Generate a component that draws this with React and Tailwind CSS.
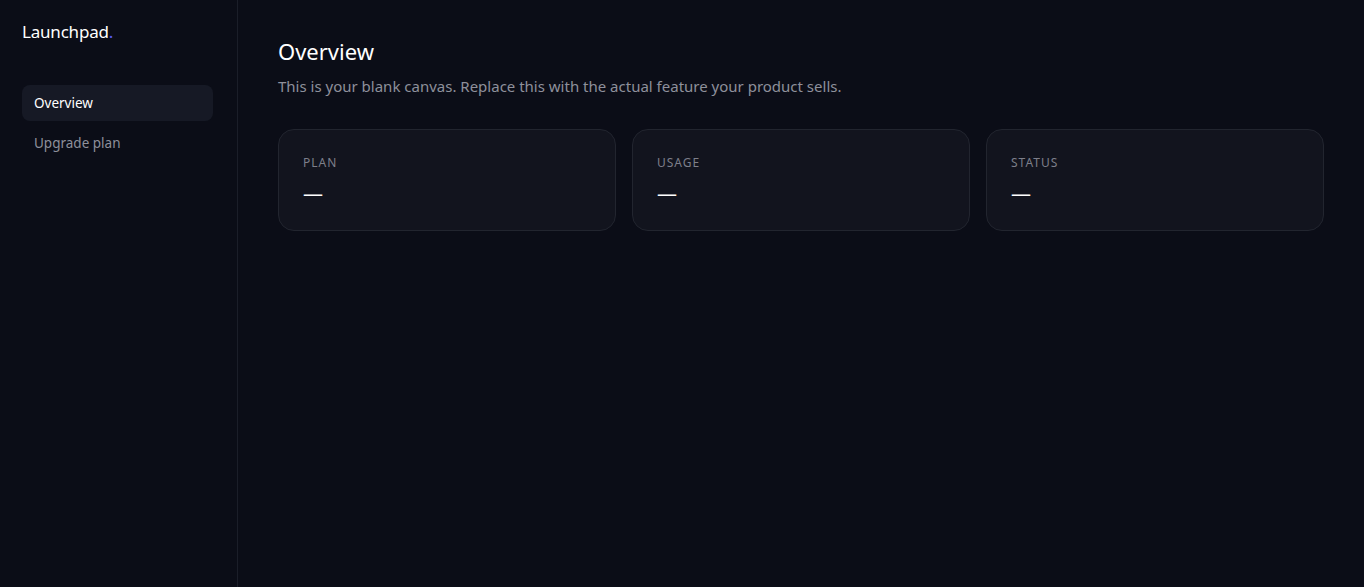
// App.jsx
const cards = [
  { label: 'Plan', value: '—' },
  { label: 'Usage', value: '—' },
  { label: 'Status', value: '—' },
];

const navItems = [
  { label: 'Overview', active: true },
  { label: 'Upgrade plan', active: false },
];

const Sidebar = () => (
  <aside className="w-[238px] shrink-0 border-r border-[#1b1e29] pl-[22px] pr-[24px] pt-[21px]">
    <div className="text-[17px] leading-[22px] text-white tracking-[-0.2px]">
      Launchpad<span className="text-[#5b5bf0]">.</span>
    </div>
    <nav className="mt-[42px] flex flex-col gap-[4px]">
      {navItems.map(item => (
        <a
          key={item.label}
          href="#"
          className={`flex h-[36px] items-center rounded-lg px-[12px] text-[13.5px] ${
            item.active ? 'bg-[#161925] text-white' : 'text-[#8e909b]'
          }`}
        >
          {item.label}
        </a>
      ))}
    </nav>
  </aside>
);

const StatCard = ({ label, value }) => (
  <div className="h-[102px] rounded-2xl border border-[#22252f] bg-[#12141e] px-[24px] pt-[25px]">
    <p className="text-[12px] leading-[16px] uppercase tracking-[1px] text-[#7d7f8a]">{label}</p>
    <p className="mt-[10px] text-[20px] leading-[26px] text-white">{value}</p>
  </div>
);

export default function App() {
  return (
    <div
      className="flex h-[587px] bg-[#0b0d17]"
      style={{ fontFamily: '"Noto Sans", "Open Sans", Arial, sans-serif' }}
    >
      <Sidebar />
      <main className="flex-1 px-[40px] pt-[36px]">
        <h1 className="text-[22px] leading-[30px] text-white">Overview</h1>
        <p className="mt-[9px] text-[15px] leading-[22px] text-[#8e909b]">
          This is your blank canvas. Replace this with the actual feature your product sells.
        </p>
        <div className="mt-[32px] grid grid-cols-3 gap-[16px]">
          {cards.map(card => (
            <StatCard key={card.label} {...card} />
          ))}
        </div>
      </main>
    </div>
  );
}
